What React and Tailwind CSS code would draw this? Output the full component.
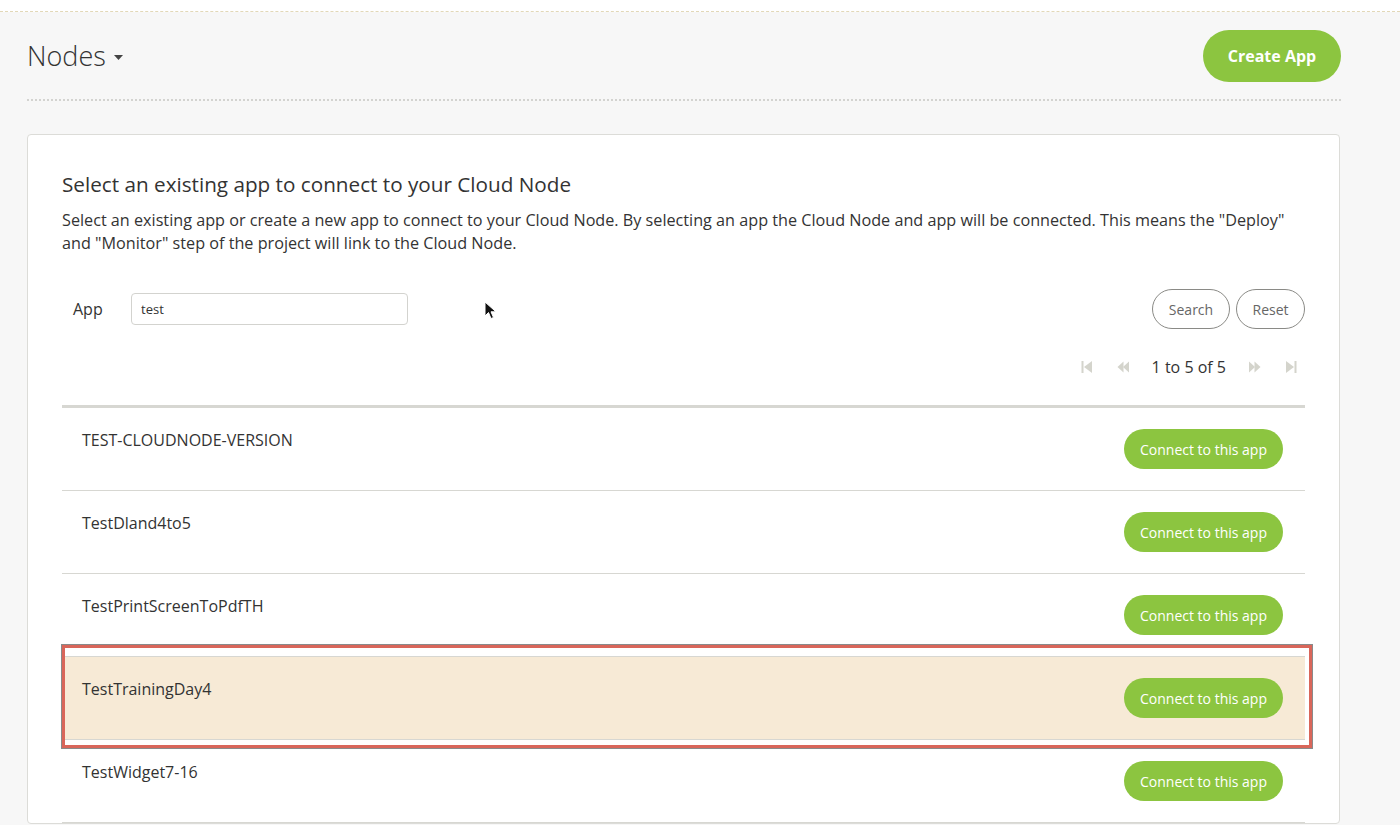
import { useState } from 'react';

const apps = [
  'TEST-CLOUDNODE-VERSION',
  'TestDland4to5',
  'TestPrintScreenToPdfTH',
  'TestTrainingDay4',
  'TestWidget7-16',
];

function PageIcon({ dir, bar }) {
  // small gray pager glyphs: bar + triangle, or two triangles
  const flip = dir === 'left' ? 'scale(-1,1) translate(-14,0)' : undefined;
  return (
    <svg width="14" height="14" viewBox="0 0 14 14" className="fill-[#d4d4cc]">
      <g transform={flip}>
        {bar ? (
          <>
            <path d="M2 1 L10 7 L2 13 Z" />
            <rect x="10.5" y="1" width="2" height="12" />
          </>
        ) : (
          <>
            <path d="M1 1.5 L7 7 L1 12.5 Z" />
            <path d="M6.5 1.5 L12.5 7 L6.5 12.5 Z" />
          </>
        )}
      </g>
    </svg>
  );
}

function GreenButton({ children }) {
  return (
    <button className="h-10 w-[159px] rounded-full bg-[#8cc540] text-[14px] text-white">
      {children}
    </button>
  );
}

export default function App() {
  const [query, setQuery] = useState('test');

  return (
    <div className="h-[825px] w-full overflow-hidden bg-[#f7f7f7] font-['Open_Sans',sans-serif] text-[#333]">
      <div className="h-3 border-b border-dashed border-[#e2d8b8] bg-white" />

      <div className="ml-[27px] flex w-[1314px] items-center justify-between border-b-2 border-dotted border-[#d3d3d0] pb-[17px] pt-[18px]">
        <h1 className="flex items-center gap-2 text-[27px] font-light text-[#333]">
          Nodes
          <svg width="9" height="6" viewBox="0 0 9 6" className="mt-1 fill-[#444]">
            <path d="M0 0 L9 0 L4.5 5 Z" />
          </svg>
        </h1>
        <button className="h-[52px] w-[138px] rounded-full bg-[#8cc540] text-[16px] font-bold text-white">
          Create App
        </button>
      </div>

      <div className="ml-[27px] mt-[33px] w-[1313px] rounded-[4px] border border-[#dcdcd8] bg-white px-[34px] pt-[35px]">
        <h2 className="text-[20.7px] leading-[28px]">Select an existing app to connect to your Cloud Node</h2>
        <p className="mt-[11px] text-[16.2px] leading-[23px]">
          Select an existing app or create a new app to connect to your Cloud Node. By selecting an app the Cloud Node and app will be connected. This means the "Deploy"
          and "Monitor" step of the project will link to the Cloud Node.
        </p>

        <div className="relative mt-[34px] flex items-center justify-between">
          <div className="flex items-center">
            <label className="w-[69px] pl-[11px] text-[16px]">App</label>
            <input
              value={query}
              onChange={(e) => setQuery(e.target.value)}
              className="h-8 w-[277px] rounded-[4px] border border-[#d3d3cf] px-[9px] text-[13px] text-[#333] outline-none"
            />
          </div>
          <svg width="14" height="20" viewBox="0 0 14 20" className="absolute left-[422px] top-[12px]">
            <path d="M1 1 L1 15 L4.5 11.5 L7 17.5 L9.5 16.5 L7 10.8 L12 10.8 Z" fill="#111" stroke="#fff" strokeWidth="1" />
          </svg>
          <div className="flex gap-[6px]">
            <button className="h-10 w-[78px] rounded-full border border-[#8a8a86] text-[14px] text-[#666]">Search</button>
            <button className="h-10 w-[69px] rounded-full border border-[#8a8a86] text-[14px] text-[#666]">Reset</button>
          </div>
        </div>

        <div className="mt-[26px] flex items-center justify-end gap-[22px] pr-[7px] text-[16px] text-[#333]">
          <PageIcon dir="left" bar />
          <PageIcon dir="left" />
          <span>1 to 5 of 5</span>
          <PageIcon dir="right" />
          <PageIcon dir="right" bar />
        </div>

        <div className="mt-[26px] border-t-[3px] border-[#d7d7d2]">
          {apps.map((name, i) => (
            <div
              key={name}
              className={`relative flex h-[83px] justify-between border-b border-[#d7d7d2] pl-5 pr-[22px] ${
                i === 3 ? 'bg-[#f7ead6]' : ''
              }`}
            >
              <span className="pt-[21px] text-[16px] leading-[22px]">{name}</span>
              <div className="flex items-center">
                <GreenButton>Connect to this app</GreenButton>
              </div>
              {i === 3 && (
                <div className="pointer-events-none absolute -bottom-[9px] left-0 -right-[7px] -top-[12px] border-[3px] border-[#d9665a] shadow-[0_0_0_1px_#8a8a8a]" />
              )}
            </div>
          ))}
        </div>
      </div>
    </div>
  );
}
